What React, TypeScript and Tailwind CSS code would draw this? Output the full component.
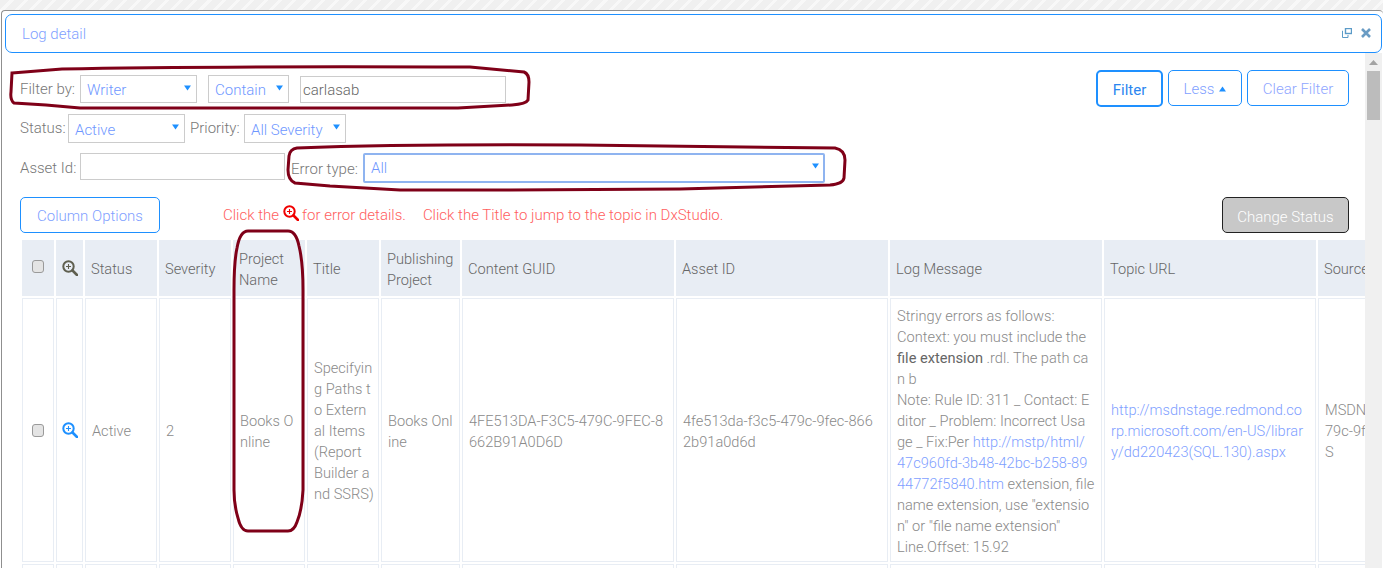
const labelClass = "text-[#777]"
const blue = "#1e90ff"

function Caret({ up = false }: { up?: boolean }) {
  return (
    <svg width="7" height="6" viewBox="0 0 7 6" className="shrink-0">
      <path d={up ? "M3.5 0.5 L7 5.5 H0 Z" : "M0 0.5 H7 L3.5 5.5 Z"} fill={blue} />
    </svg>
  )
}

function Select({ value, className }: { value: string; className: string }) {
  return (
    <div className={"relative shrink-0 " + className}>
      <select
        defaultValue={value}
        className="h-full w-full appearance-none bg-white pl-[6px] pt-[3px] text-[#6f97ff] outline-none border border-[#ccc]"
      >
        <option>{value}</option>
      </select>
      <span className="absolute right-[6px] top-[10px] flex">
        <Caret />
      </span>
    </div>
  )
}

function ZoomIcon({ color, size = 16 }: { color: string; size?: number }) {
  return (
    <svg width={size} height={size} viewBox="0 0 16 16" fill="none">
      <circle cx="6.5" cy="6.5" r="5.2" stroke={color} strokeWidth="2" />
      <path d="M10.5 10.5 L15 15" stroke={color} strokeWidth="2.6" strokeLinecap="round" />
      <path d="M6.5 4 V9 M4 6.5 H9" stroke={color} strokeWidth="1.1" />
    </svg>
  )
}

function RowCheckbox() {
  return (
    <input
      type="checkbox"
      className="block mx-auto -mt-[3px] h-[13px] w-[12px] appearance-none rounded-[3px] border border-[#9a9a9a] bg-[#e4e4e4]"
    />
  )
}

const headers = [
  ["Status"],
  ["Severity"],
  ["Project", "Name"],
  ["Title"],
  ["Publishing", "Project"],
  ["Content GUID"],
  ["Asset ID"],
  ["Log Message"],
  ["Topic URL"],
  ["Source"],
]

const colWidths = ["w-[32px]", "w-[27px]", "w-[72px]", "w-[72px]", "w-[72px]", "w-[72px]", "w-[79px]", "w-[212px]", "w-[212px]", "w-[212px]", "w-[212px]", "w-[212px]"]

const cellClass = "border border-[#e8edf4] px-[6px] pt-[3px] align-middle text-[#8a8a8a] whitespace-nowrap overflow-hidden"
const linkClass = "text-[#7f9fff]"

function LogTable() {
  return (
    <table className="table-fixed border-separate border-spacing-[2px] w-[1510px] text-[14.6px] leading-[21px]">
      <colgroup>
        {colWidths.map((w, i) => (
          <col key={i} className={w} />
        ))}
      </colgroup>
      <thead>
        <tr className="h-[56px] bg-[#e8edf4] text-left">
          <th className="font-light">
            <RowCheckbox />
          </th>
          <th className="font-light">
            <span className="flex justify-center">
              <ZoomIcon color="#5f5f4f" />
            </span>
          </th>
          {headers.map((h) => (
            <th key={h[0]} className="px-[6px] pt-[3px] font-light text-[#666] overflow-hidden whitespace-nowrap">
              {h[0]}
              {h[1] && (
                <>
                  <br />
                  {h[1]}
                </>
              )}
            </th>
          ))}
        </tr>
      </thead>
      <tbody>
        <tr className="h-[264px]">
          <td className={cellClass}>
            <RowCheckbox />
          </td>
          <td className={cellClass + " !px-0 !pt-0"}>
            <span className="flex justify-center">
              <ZoomIcon color={blue} />
            </span>
          </td>
          <td className={cellClass}>Active</td>
          <td className={cellClass}>2</td>
          <td className={cellClass}>
            Books O
            <br />
            nline
          </td>
          <td className={cellClass}>
            Specifyin
            <br />g Paths t
            <br />o Extern
            <br />al Items
            <br />
            (Report
            <br />
            Builder a
            <br />
            nd SSRS)
          </td>
          <td className={cellClass}>
            Books Onl
            <br />
            ine
          </td>
          <td className={cellClass}>
            4FE513DA-F3C5-479C-9FEC-8
            <br />
            662B91A0D6D
          </td>
          <td className={cellClass}>
            4fe513da-f3c5-479c-9fec-866
            <br />
            2b91a0d6d
          </td>
          <td className={cellClass}>
            Stringy errors as follows:
            <br />
            Context: you must include the
            <br />
            <b className="font-normal text-[#666]">file extension</b> .rdl. The path ca
            <br />n b
            <br />
            Note: Rule ID: 311 _ Contact: E
            <br />
            ditor _ Problem: Incorrect Usa
            <br />
            ge _ Fix:Per <span className={linkClass}>http://mstp/html/</span>
            <br />
            <span className={linkClass}>47c960fd-3b48-42bc-b258-89</span>
            <br />
            <span className={linkClass}>44772f5840.htm</span> extension, file
            <br />
            name extension, use "extensio
            <br />
            n" or "file name extension"
            <br />
            Line.Offset: 15.92
          </td>
          <td className={cellClass}>
            <span className={linkClass}>
              http://msdnstage.redmond.co
              <br />
              rp.microsoft.com/en-US/librar
              <br />
              y/dd220423(SQL.130).aspx
            </span>
          </td>
          <td className={cellClass}>
            MSDN
            <br />
            79c-9f
            <br />S
          </td>
        </tr>
        <tr className="h-[40px]">
          {colWidths.map((w, i) => (
            <td key={i} className={cellClass} />
          ))}
        </tr>
      </tbody>
    </table>
  )
}

export default function App() {
  return (
    <div className="relative h-[568px] w-[1383px] overflow-hidden bg-white text-[15px] font-light text-[#777] font-['Roboto','Open_Sans',sans-serif]">
      <div className="h-[10px] bg-[repeating-linear-gradient(135deg,#f0f0f0_0,#f0f0f0_7px,#f8f8f8_7px,#f8f8f8_10px)]" />
      <div className="ml-[1px] flex h-[558px] flex-col rounded-tl-[4px] rounded-tr-[4px] border-t border-l border-[#8f8f8f] bg-white pt-[3px]">
        <div className="ml-[3px] mr-[1px] flex h-[39px] shrink-0 items-center justify-between rounded-[7px] border border-[#1e90ff] pl-[16px] pr-[10px]">
          <span className="pt-[2px] text-[#7f9fff]">Log detail</span>
          <div className="flex items-center gap-[9px] -mt-[1px]">
            <svg width="10" height="10" viewBox="0 0 10 10" fill="none" stroke="#5b9bc8" strokeWidth="1">
              <rect x="3.5" y="0.5" width="6" height="5" strokeWidth="1.4" />
              <path d="M1 3 H0.5 V9.5 H6 V7" />
            </svg>
            <svg width="10" height="10" viewBox="0 0 10 10" stroke="#6a9cc4" strokeWidth="2.6">
              <path d="M1 1 L9 9 M9 1 L1 9" />
            </svg>
          </div>
        </div>

        <div className="flex min-h-0 flex-1">
          <div className="min-w-0 flex-1 overflow-hidden pt-[17px]">
            <div className="flex items-start justify-between pl-[18px] pr-[16px]">
              <div className="mt-[5px] flex flex-col">
                <div className="flex h-[28px] items-center">
                  <span className={labelClass + " w-[60px]"}>Filter by:</span>
                  <Select value="Writer" className="h-[28px] w-[117px]" />
                  <Select value="Contain" className="ml-[11px] h-[28px] w-[81px]" />
                  <input
                    defaultValue="carlasab"
                    className="ml-[11px] h-[27px] w-[206px] border border-[#ccc] px-[2px] pt-[2px] text-[#666] outline-none"
                  />
                </div>
                <div className="mt-[11px] flex h-[29px] items-center">
                  <span className={labelClass + " w-[48px] pb-[1px]"}>Status:</span>
                  <Select value="Active" className="h-[29px] w-[117px]" />
                  <span className={labelClass + " ml-[5px] w-[54px] pb-[1px]"}>Priority:</span>
                  <Select value="All Severity" className="h-[29px] w-[102px]" />
                </div>
                <div className="mt-[10px] flex h-[30px] items-start">
                  <span className={labelClass + " w-[60px] pt-[4px]"}>Asset Id:</span>
                  <input className="h-[27px] w-[205px] border border-[#ccc] outline-none" />
                  <span className={labelClass + " ml-[6px] w-[72px] pt-[5px]"}>Error type:</span>
                  <div className="relative h-[30px] w-[462px]">
                    <select className="h-full w-full appearance-none rounded-[2px] border-2 border-[#8fb4f0] bg-white pl-[6px] text-[#6f97ff] outline-none">
                      <option>All</option>
                    </select>
                    <span className="absolute right-[6px] top-[10px] flex">
                      <Caret />
                    </span>
                  </div>
                </div>
              </div>
              <div className="flex items-start gap-[5px]">
                <button className="h-[37px] w-[67px] rounded-[5px] border-2 border-[#1e90ff] pt-[3px] font-normal text-[#2a86f0]">
                  Filter
                </button>
                <button className="flex h-[36px] w-[74px] items-center justify-center gap-[5px] rounded-[5px] border border-[#1e90ff] pt-[2px] text-[#7f9fff]">
                  Less
                  <Caret up />
                </button>
                <button className="h-[36px] w-[102px] rounded-[5px] border border-[#1e90ff] pt-[2px] text-[#8fa6ff]">
                  Clear Filter
                </button>
              </div>
            </div>

            <div className="mt-[14px] flex h-[36px] items-start justify-between pl-[18px] pr-[16px]">
              <div className="flex items-start">
                <button className="h-[36px] w-[140px] rounded-[5px] border border-[#1e90ff] pt-[3px] text-[#7f9fff]">
                  Column Options
                </button>
                <p className="ml-[63px] flex items-center pt-[7px] text-[#ff6060]">
                  Click the
                  <span className="ml-[4px] mr-[3px] -mt-[4px]">
                    <ZoomIcon color="#f00000" />
                  </span>
                  for error details.
                  <span className="ml-[17px]">Click the Title to jump to the topic in DxStudio.</span>
                </p>
              </div>
              <button className="h-[36px] w-[127px] rounded-[5px] border border-[#222] bg-[#c8c8c8] pt-[4px] text-white">
                Change Status
              </button>
            </div>

            <div className="mt-[5px] pl-[18px]">
              <LogTable />
            </div>
          </div>

          <div className="mr-[1px] flex w-[17px] shrink-0 flex-col items-center bg-[#f0f0f0]">
            <svg width="9" height="5" viewBox="0 0 9 5" className="mt-[7px]">
              <path d="M4.5 0 L9 5 H0 Z" fill="#a3a3a3" />
            </svg>
            <div className="mt-[6px] h-[49px] w-[13px] bg-[#bcbcbc]" />
          </div>
        </div>
      </div>

      {/* hand drawn marks over the screenshot */}
      <svg className="pointer-events-none absolute left-0 top-0" width="1383" height="568" fill="none" stroke="#7f0018" strokeWidth="3">
        <path d="M12 73 L62 69 Q200 66 470 67 L524 72 Q529 74 529 82 L528 100 Q526 104 512 105 L458 108 L80 108 L46 105 L14 103 Q10 100 11 92 Z" />
        <path d="M297 148 Q400 144 580 145 L835 148 Q845 150 845 160 L844 178 Q843 184 830 185 L680 189 L510 190 L400 190 L330 186 L295 183 Q288 180 288 170 L289 156 Q290 149 297 148 Z" />
        <path d="M248 231 H288 Q296 231 299 246 Q303 262 303 290 L303 490 Q302 510 297 522 Q294 531 288 531 H248 Q241 531 238 518 Q234 505 234 490 V290 Q234 262 237 248 Q240 231 248 231 Z" />
      </svg>
    </div>
  )
}
